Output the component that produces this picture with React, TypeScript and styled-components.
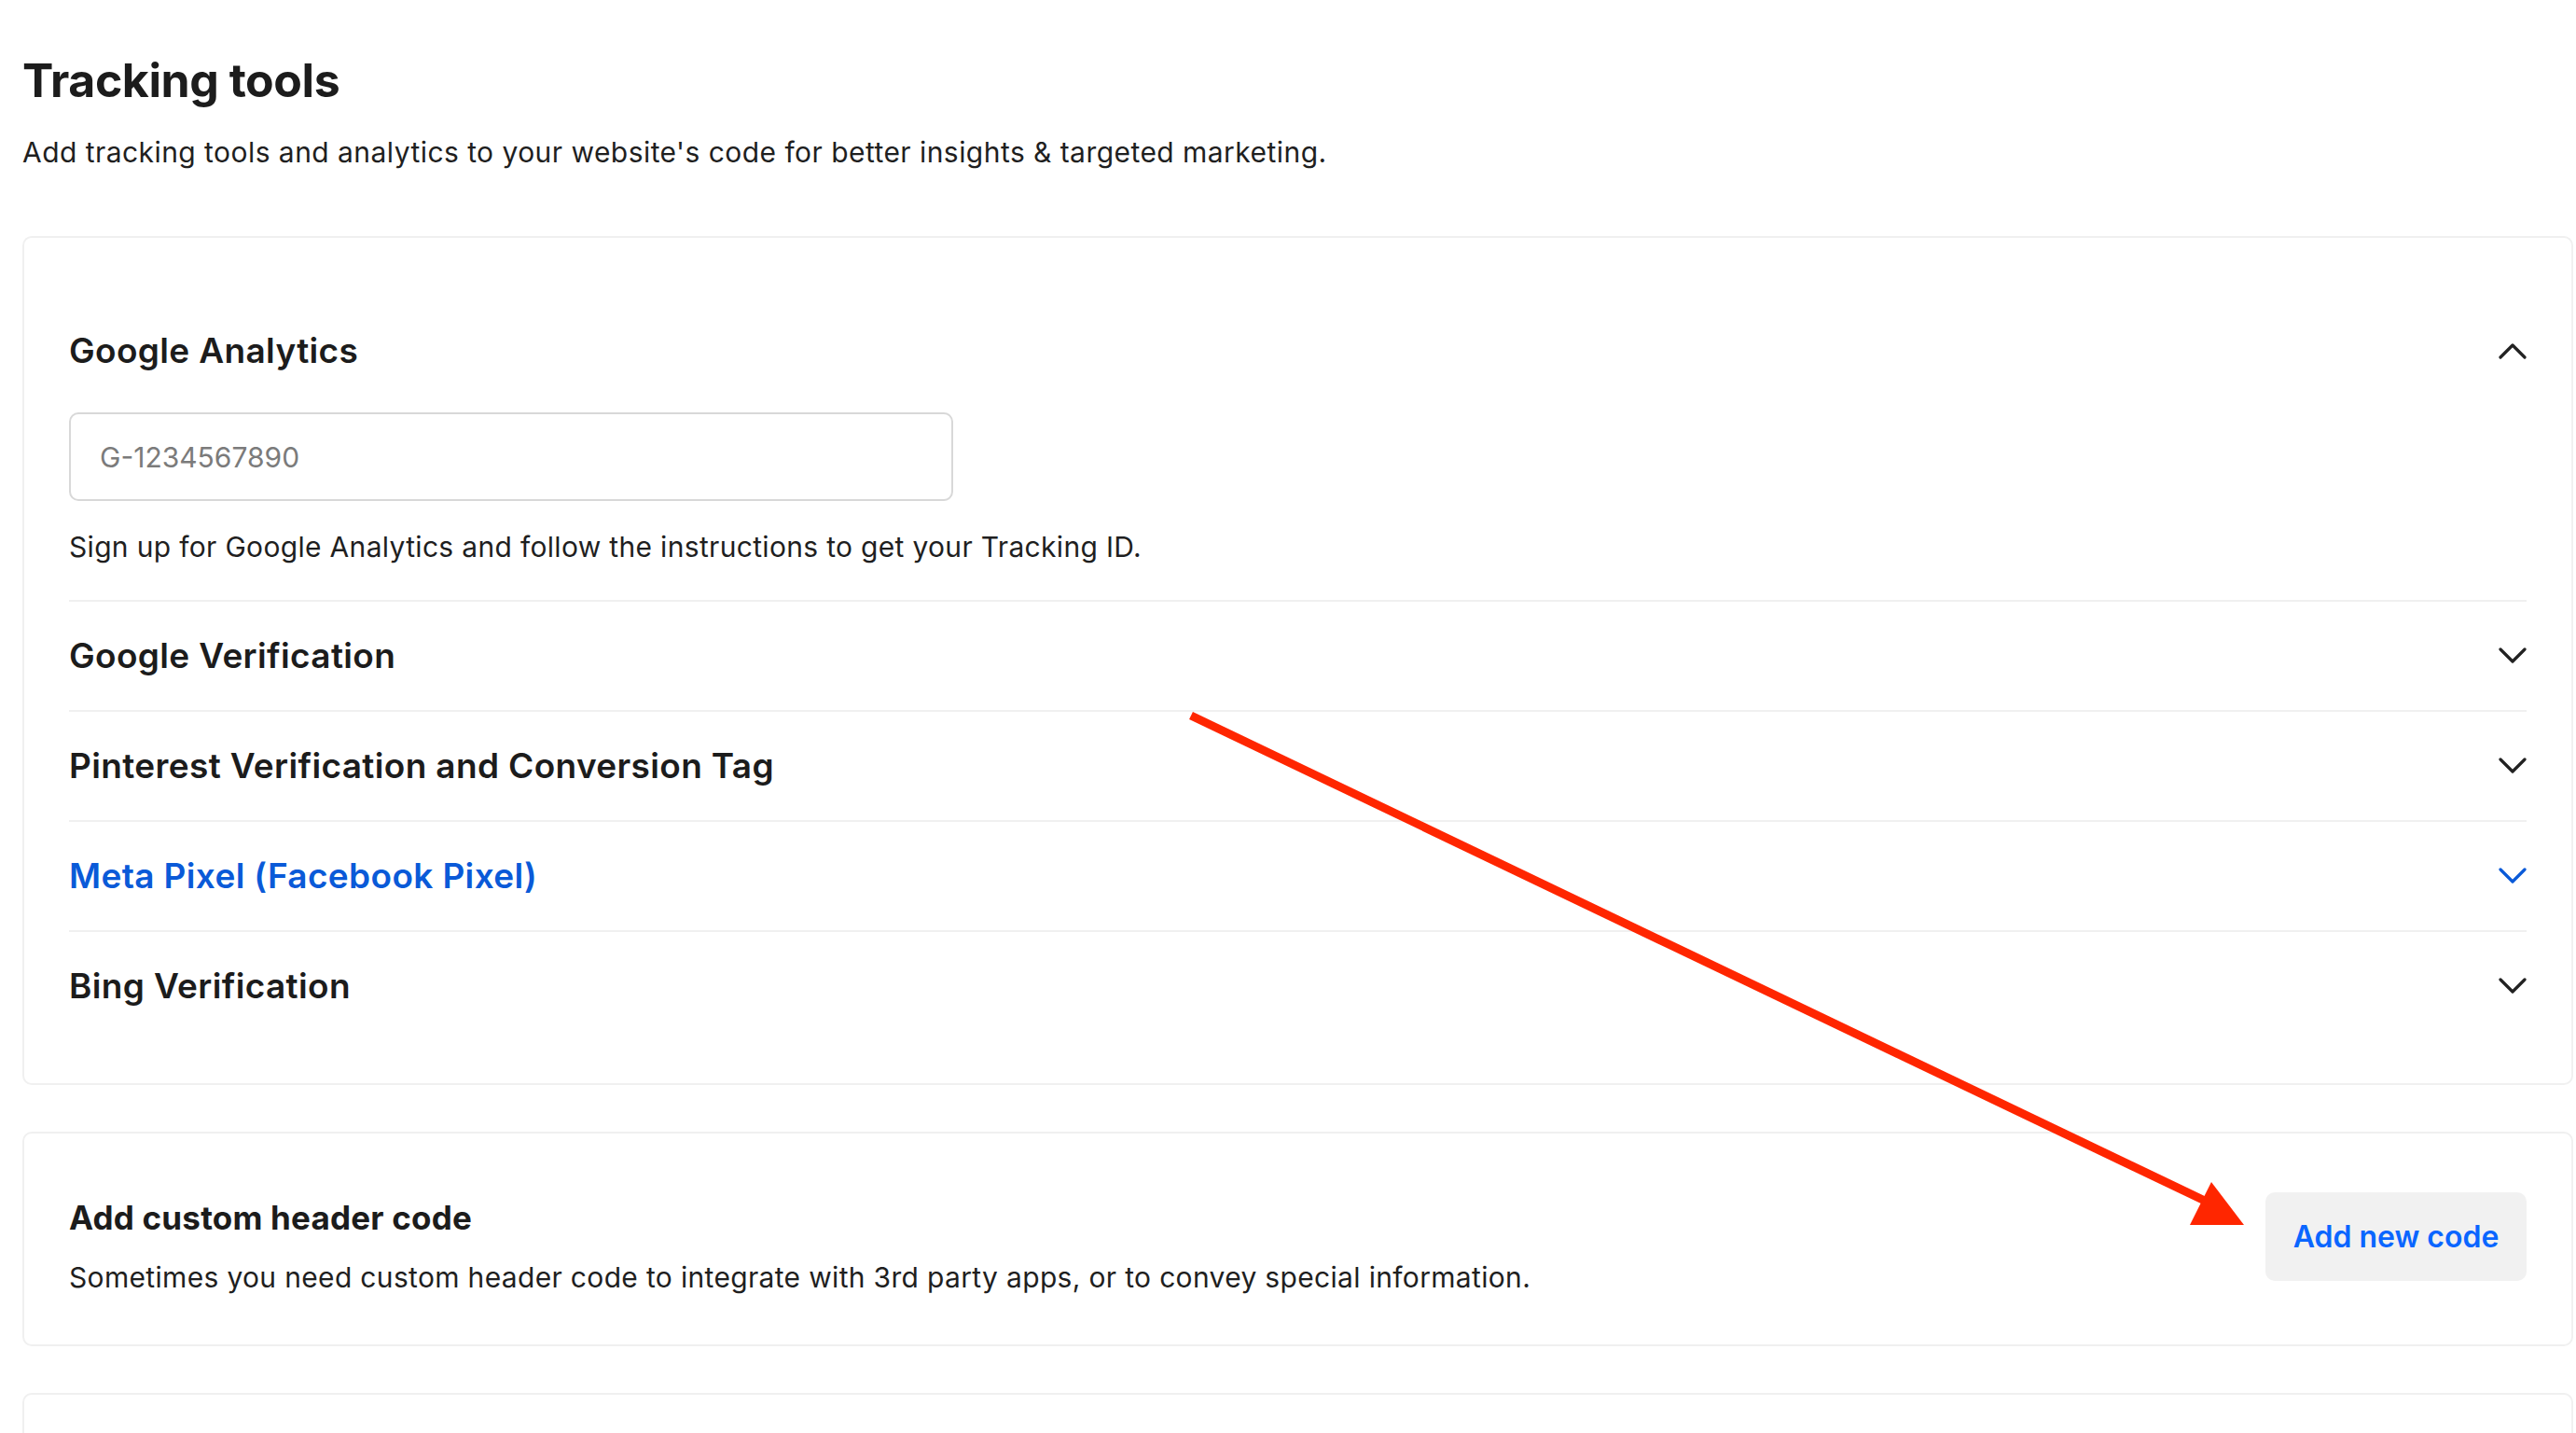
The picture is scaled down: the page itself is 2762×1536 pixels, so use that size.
import React from "react";
import styled, { createGlobalStyle } from "styled-components";

const GlobalStyle = createGlobalStyle`
  html, body {
    margin: 0;
    padding: 0;
    background: #ffffff;
  }
  body {
    font-family: "Inter", "Liberation Sans", sans-serif;
    color: #1c1c1c;
    -webkit-font-smoothing: antialiased;
  }
  * {
    box-sizing: border-box;
  }
`;

const Page = styled.div`
  position: relative;
  padding: 56px 3px 0 24px;
  min-height: 1536px;
  overflow: hidden;
`;

const Title = styled.h1`
  margin: 0;
  font-size: 50px;
  line-height: 60px;
  font-weight: 700;
  letter-spacing: -0.45px;
  color: #1c1c1c;
`;

const Subtitle = styled.p`
  margin: 29px 0 0;
  font-size: 30px;
  line-height: 36px;
  font-weight: 400;
  letter-spacing: 0.45px;
  color: #1f1f1f;
`;

const Card = styled.section`
  border: 2px solid #f0f0f0;
  border-radius: 10px;
  background: #fff;
  margin-top: 50px;
`;

const AccordionCard = styled(Card)`
  margin-top: 72px;
  padding: 63px 48px 46px;
`;

const Item = styled.div`
  & + & {
    border-top: 2px solid #f0f0f0;
  }
`;

const ItemHeader = styled.div`
  display: flex;
  align-items: center;
  justify-content: space-between;
  padding: 36px 0;
  cursor: pointer;
`;

const ItemTitle = styled.h3<{ $active?: boolean }>`
  margin: 0;
  font-size: 37px;
  line-height: 44px;
  font-weight: 600;
  letter-spacing: 0.35px;
  color: ${(p) => (p.$active ? "#0a5ad8" : "#1c1c1c")};
`;

const Chevron = styled.svg<{ $active?: boolean }>`
  width: 30px;
  height: 18px;
  color: ${(p) => (p.$active ? "#0a5ad8" : "#222222")};
  flex-shrink: 0;
`;

const ItemBody = styled.div`
  padding: 8px 0 39px;
`;

const Input = styled.input`
  display: block;
  width: 948px;
  height: 95px;
  padding: 0 31px;
  border: 2px solid #d8d8d8;
  border-radius: 10px;
  font-family: inherit;
  font-size: 30px;
  color: #1c1c1c;
  outline: none;

  &::placeholder {
    color: #7b7b7b;
  }
`;

const Help = styled.p`
  margin: 31px 0 0;
  font-size: 30px;
  line-height: 36px;
  letter-spacing: 0.32px;
  color: #1f1f1f;
`;

const CustomCard = styled(Card)`
  display: flex;
  align-items: flex-start;
  justify-content: space-between;
  padding: 63px 48px 54px;
`;

const TextGroup = styled.div`
  padding-top: 6px;
`;

const CardTitle = styled.h2`
  margin: 0;
  font-size: 35px;
  line-height: 42px;
  font-weight: 700;
  letter-spacing: 0.2px;
  color: #1c1c1c;
`;

const CardText = styled.p`
  margin: 25px 0 0;
  font-size: 30px;
  line-height: 36px;
  letter-spacing: 0.33px;
  color: #1f1f1f;
`;

const AddButton = styled.button`
  width: 280px;
  height: 95px;
  border: none;
  border-radius: 10px;
  background: #f1f1f1;
  color: #0a66ff;
  font-family: inherit;
  font-size: 32px;
  font-weight: 600;
  cursor: pointer;
`;

const EmptyCard = styled(Card)`
  height: 200px;
`;

const Annotation = styled.svg`
  position: absolute;
  top: 0;
  left: 0;
  width: 2762px;
  height: 1536px;
  pointer-events: none;
`;

const ChevronIcon: React.FC<{ up?: boolean; active?: boolean }> = ({ up, active }) => (
  <Chevron $active={active} viewBox="0 0 30 18" fill="none">
    <polyline
      points={up ? "2,16 15,3 28,16" : "2,2 15,15 28,2"}
      stroke="currentColor"
      strokeWidth="3.2"
      strokeLinecap="round"
      strokeLinejoin="round"
    />
  </Chevron>
);

const tools = [
  { name: "Google Verification" },
  { name: "Pinterest Verification and Conversion Tag" },
  { name: "Meta Pixel (Facebook Pixel)", active: true },
  { name: "Bing Verification" },
];

const App: React.FC = () => {
  return (
    <Page>
      <GlobalStyle />
      <Title>Tracking tools</Title>
      <Subtitle>
        Add tracking tools and analytics to your website's code for better insights &amp; targeted
        marketing.
      </Subtitle>

      <AccordionCard>
        <Item>
          <ItemHeader>
            <ItemTitle>Google Analytics</ItemTitle>
            <ChevronIcon up />
          </ItemHeader>
          <ItemBody>
            <Input placeholder="G-1234567890" />
            <Help>
              Sign up for Google Analytics and follow the instructions to get your Tracking ID.
            </Help>
          </ItemBody>
        </Item>
        {tools.map((tool) => (
          <Item key={tool.name}>
            <ItemHeader>
              <ItemTitle $active={tool.active}>{tool.name}</ItemTitle>
              <ChevronIcon active={tool.active} />
            </ItemHeader>
          </Item>
        ))}
      </AccordionCard>

      <CustomCard>
        <TextGroup>
          <CardTitle>Add custom header code</CardTitle>
          <CardText>
            Sometimes you need custom header code to integrate with 3rd party apps, or to convey
            special information.
          </CardText>
        </TextGroup>
        <AddButton>Add new code</AddButton>
      </CustomCard>

      <EmptyCard />

      <Annotation viewBox="0 0 2762 1536">
        <line x1="1277" y1="767" x2="2366" y2="1288" stroke="#ff2600" strokeWidth="9" />
        <polygon points="2371,1267 2348,1313 2406,1313" fill="#ff2600" />
      </Annotation>
    </Page>
  );
};

export default App;
